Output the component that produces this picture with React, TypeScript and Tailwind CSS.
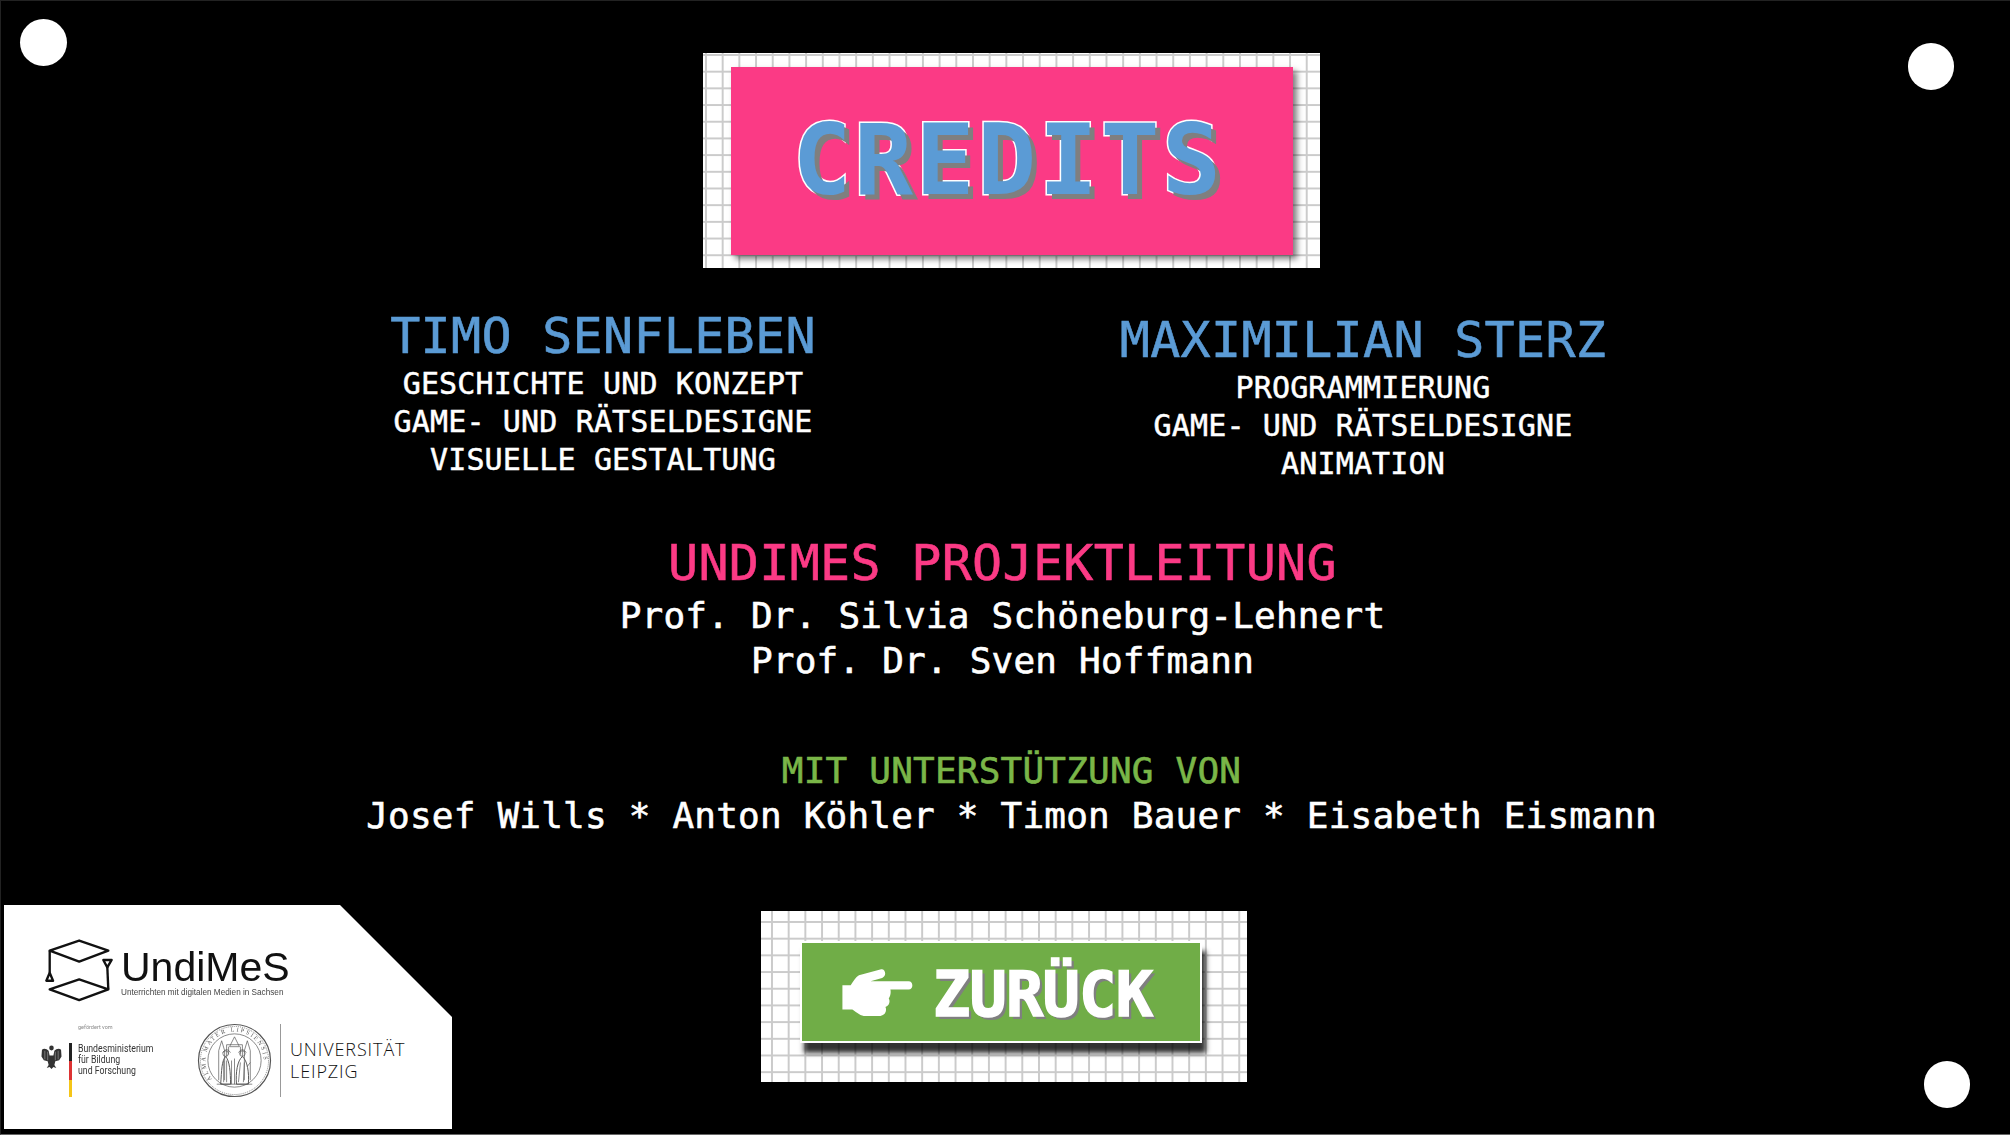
import React from "react";

const mono = "[font-family:'DejaVu_Sans_Mono','Liberation_Mono',monospace]";

function Person({ name, lines, className }: { name: string; lines: string[]; className?: string }) {
  return (
    <div className={`w-[600px] flex flex-col items-center ${className ?? ""}`}>
      <h2 className="text-[50px] leading-[50px] tracking-[0.3px] text-[#5b9bd5] mb-[4px] [-webkit-text-stroke:0.6px_#5b9bd5]">{name}</h2>
      {lines.map((l) => (
        <p key={l} className="text-[30px] leading-[38px] tracking-[0.15px] text-white [-webkit-text-stroke:0.5px_#fff]">{l}</p>
      ))}
    </div>
  );
}

function CapLogo() {
  return (
    <svg viewBox="40 25 215 190" className="w-[72px] h-[64px] shrink-0" fill="none" stroke="#111" strokeWidth="7" strokeLinejoin="round">
      <path d="M60 62 148 32 235 62 148 95Z" />
      <path d="M60 178 148 148 235 178 148 210Z" />
      <path d="M60 62V128" />
      <path d="M60 128 50 152H70Z" />
      <path d="M235 178 232 110" />
      <path d="M220 90H245L232 112Z" />
    </svg>
  );
}

function Eagle() {
  return (
    <svg viewBox="0 0 22 26" className="w-[21px] h-[25px] shrink-0" fill="#333">
      <ellipse cx="11" cy="4" rx="2.4" ry="2.6" />
      <path d="M1 6C3 4 6 5 8 7L9 12H13L14 7C16 5 19 4 21 6L21.500 13 19 17 15 18 14 22 16 25 13 24 11 26 9 24 6 25 8 22 7 18 3 17 .5 13Z" />
      <path d="M4 7V16M7 8V17M15 8V17M18 7V16" stroke="#aaa" strokeWidth=".6" />
    </svg>
  );
}

function Seal() {
  return (
    <svg viewBox="0 0 76 76" className="w-[75px] h-[75px] shrink-0" fill="none" stroke="#555" strokeWidth=".7">
      <defs>
        <path id="sealRing" d="M17.100 58.900A29.500 29.500 0 1 1 58.900 58.900" />
      </defs>
      <circle cx="38" cy="38" r="36.500" strokeWidth="1.200" />
      <circle cx="38" cy="38" r="34.500" strokeDasharray="1 1" />
      <circle cx="38" cy="38" r="27" />
      <text fontSize="6" fill="#555" stroke="none" fontFamily="Liberation Serif, serif" letterSpacing="2">
        <textPath href="#sealRing" startOffset="2%">ALMA MATER LIPSIENSIS</textPath>
      </text>
      <path d="M22 58V28L25 18 28 28V58M48 58V28L51 18 54 28V58M30 34V22H46V34M38 14 33 24H43Z" />
      <path d="M26 30Q30 24 34 30M42 30Q46 24 50 30M32 32V24M44 32V24" />
      <circle cx="29" cy="31" r="2.800" />
      <circle cx="46" cy="31" r="2.800" />
      <path d="M24 62C25 48 25 38 29 34 33 38 34 50 34 62ZM40 62C39 50 41 38 46 34 51 38 53 50 52 62Z" strokeWidth="1" />
      <path d="M27 38V60M30 38V60M44 40 42 60M48 40 47 60M51 44 54 40" />
      <path d="M35 38V62M38 36V62M20 62H56" />
    </svg>
  );
}

function LogoPanel() {
  return (
    <div className="w-[448px] h-[224px] bg-white ml-[3px] shrink-0 flex flex-col [clip-path:polygon(0_0,336px_0,448px_112px,448px_224px,0_224px)]">
      <div className="flex items-start pl-[39px] pt-[33px] blur-[0.4px]">
        <CapLogo />
        <div className="ml-[6px] mt-[6px] flex flex-col [font-family:'Liberation_Sans',sans-serif]">
          <span className="text-[41px] leading-[46px] text-[#111]">UndiMeS</span>
          <span className="text-[8.2px] leading-[10px] -mt-[2px] text-[#444] whitespace-nowrap">Unterrichten mit digitalen Medien in Sachsen</span>
        </div>
      </div>
      <div className="flex items-start mt-[22px] pl-[37px]">
        <div className="flex flex-col w-[120px] blur-[0.4px]">
          <div className="pl-[37px] text-[5.5px] leading-[6px] text-[#888] whitespace-nowrap [font-family:'Roboto',sans-serif]">gefördert vom</div>
          <div className="flex items-start mt-[13px]">
            <div className="mt-[1px]"><Eagle /></div>
            <div className="ml-[7px] w-[3px] h-[54px] flex flex-col shrink-0">
              <div className="h-[18px] bg-[#222]" />
              <div className="h-[19px] bg-[#dd3333]" />
              <div className="h-[17px] bg-[#f5c518]" />
            </div>
            <div className="ml-[6px] text-[11.5px] leading-[11px] text-[#333] whitespace-nowrap origin-left scale-x-[0.76] [font-family:'Roboto',sans-serif]">
              Bundesministerium<br />für Bildung<br />und Forschung
            </div>
          </div>
        </div>
        <div className="ml-[36px] -mt-[1px] blur-[0.3px]"><Seal /></div>
        <div className="ml-[8px] w-px h-[73px] bg-[#999]" />
        <div className="ml-[9px] mt-[14px] text-[18px] leading-[22px] tracking-[0.9px] text-[#111] font-light [font-family:'Open_Sans',sans-serif]">
          UNIVERSITÄT<br />LEIPZIG
        </div>
      </div>
    </div>
  );
}

function Hand() {
  return (
    <svg viewBox="275 203 212 142" className="w-[71px] h-[47px] shrink-0" fill="#fff">
      <path d="M275 252H300C308 240 315 228 325 222L392 204C405 202 410 225 395 230L360 240H475C490 240 490 265 475 265H420C422 275 420 285 415 292C420 300 417 315 405 318C410 328 405 342 390 345H345C330 345 320 335 305 325H275Z" />
    </svg>
  );
}

const grid =
  "bg-white bg-[linear-gradient(#cbcbcb_2px,transparent_2px),linear-gradient(90deg,#cbcbcb_2px,transparent_2px)] bg-[size:16.7px_16.7px]";

export default function App() {
  return (
    <div className={`relative w-[2010px] h-[1135px] box-border overflow-hidden bg-black border-t border-l border-b border-t-[#222] border-l-[#222] border-b-[#666] flex flex-col ${mono}`}>
      <div className="absolute left-[19px] top-[18px] w-[47px] h-[47px] rounded-full bg-white" />
      <div className="absolute left-[1907px] top-[42px] w-[46px] h-[47px] rounded-full bg-white" />
      <div className="absolute left-[1923px] top-[1060px] w-[46px] h-[47px] rounded-full bg-white" />

      <div className={`ml-[702px] mt-[52px] w-[617px] h-[215px] shrink-0 flex items-center justify-center ${grid} bg-[position:2px_1px]`}>
        <div className="w-[562px] h-[188px] bg-[#fb3a85] flex items-center justify-center shadow-[4px_4px_6px_rgba(0,0,0,0.5)]">
          <h1 className="font-bold text-[98px] leading-none tracking-[2.6px] text-[#5b9bd5] [-webkit-text-stroke:3px_#fff] [paint-order:stroke_fill] [text-shadow:5px_5px_0_#7f7f7f] -ml-[7px] -mt-[2px]">
            CREDITS
          </h1>
        </div>
      </div>

      <div className="flex gap-[160px] ml-[302px] mt-[43px] shrink-0">
        <Person name="TIMO SENFLEBEN" lines={["GESCHICHTE UND KONZEPT", "GAME- UND RÄTSELDESIGNE", "VISUELLE GESTALTUNG"]} />
        <Person className="mt-[4px]" name="MAXIMILIAN STERZ" lines={["PROGRAMMIERUNG", "GAME- UND RÄTSELDESIGNE", "ANIMATION"]} />
      </div>

      <div className="flex flex-col items-center mt-[55px] pr-[6px] shrink-0">
        <h2 className="text-[50px] leading-[50px] tracking-[0.3px] text-[#fb3a85] mb-[5px] [-webkit-text-stroke:0.6px_#fb3a85]">UNDIMES PROJEKTLEITUNG</h2>
        <p className="text-[36px] leading-[45px] tracking-[0.2px] text-white [-webkit-text-stroke:0.6px_#fff]">Prof. Dr. Silvia Schöneburg-Lehnert</p>
        <p className="text-[36px] leading-[45px] tracking-[0.2px] text-white [-webkit-text-stroke:0.6px_#fff]">Prof. Dr. Sven Hoffmann</p>
      </div>

      <div className="flex flex-col items-center mt-[65px] pl-[12px] shrink-0">
        <h3 className="text-[36px] leading-[45px] tracking-[0.2px] text-[#7ab648] [-webkit-text-stroke:0.6px_#7ab648]">MIT UNTERSTÜTZUNG VON</h3>
        <p className="text-[36px] leading-[45px] tracking-[0.2px] text-white [-webkit-text-stroke:0.6px_#fff]">Josef Wills * Anton Köhler * Timon Bauer * Eisabeth Eismann</p>
      </div>

      <div className="flex items-start mt-[67px] shrink-0">
        <LogoPanel />
        <div className={`ml-[309px] mt-[6px] w-[486px] h-[171px] flex items-start ${grid} bg-[position:10px_10px]`}>
          <button className="ml-[39px] mt-[30px] w-[402px] h-[102px] box-border border-2 border-white bg-[#70ad47] flex items-center shadow-[4px_10px_5px_rgba(0,0,0,0.8)]">
            <span className="ml-[40px]"><Hand /></span>
            <span className="ml-[20px] mt-[5px] font-bold text-[62px] leading-none tracking-[-0.8px] text-white [-webkit-text-stroke:1.5px_#fff] [text-shadow:3px_3px_0_#7f7f7f]">ZURÜCK</span>
          </button>
        </div>
      </div>
    </div>
  );
}
